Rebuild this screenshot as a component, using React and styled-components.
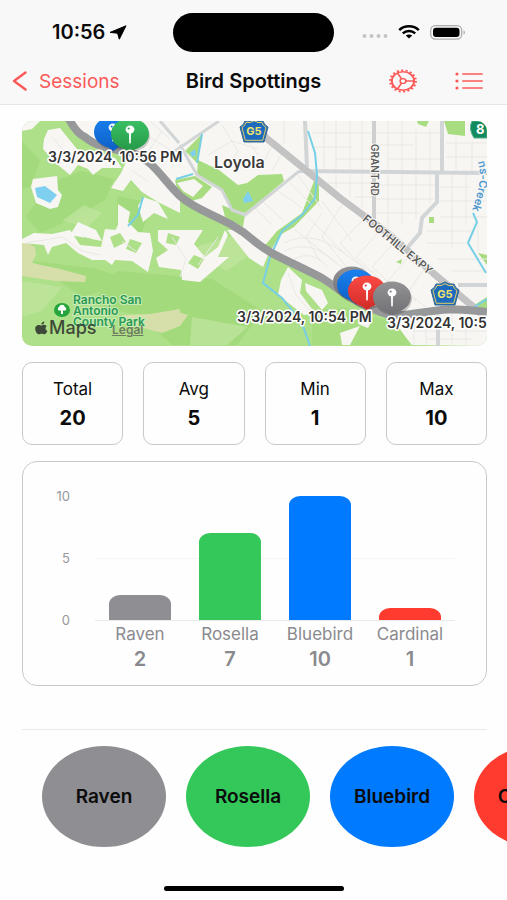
import React from "react";
import styled, { createGlobalStyle } from "styled-components";

const GlobalStyle = createGlobalStyle`
  * {
    box-sizing: border-box;
  }
  body {
    margin: 0;
    background: #fefefe;
    color: #0b0b0b;
    font-family: Inter, "Liberation Sans", sans-serif;
    font-optical-sizing: none;
    overflow-x: hidden;
  }
  h1, p, ul, dl, dd {
    margin: 0;
    padding: 0;
  }
  button {
    padding: 0;
    border: 0;
    background: none;
    font: inherit;
    color: inherit;
    cursor: pointer;
  }
`;

const Page = styled.div`
  min-height: 100vh;
  display: flex;
  flex-direction: column;
`;

const Header = styled.header`
  background: #f8f8f8;
  border-bottom: 1px solid #e6e6e6;
`;

const StatusBar = styled.div`
  height: 64px;
  display: grid;
  grid-template-columns: 1fr 161px 1fr;
  align-items: center;
`;

const Clock = styled.div`
  display: flex;
  align-items: center;
  gap: 4px;
  padding-left: 52px;
  font-size: 20px;
  font-weight: 600;
`;

const Island = styled.div`
  height: 39px;
  border-radius: 20px;
  background: #000;
`;

const Signals = styled.div`
  display: flex;
  align-items: center;
  justify-content: flex-end;
  gap: 10px;
  padding-right: 41px;
`;

const NavBar = styled.nav`
  height: 40px;
  padding: 0 0 6px;
  display: grid;
  grid-template-columns: 1fr auto 1fr;
  align-items: center;
`;

const BackLink = styled.a`
  display: flex;
  align-items: center;
  gap: 11px;
  padding-left: 12px;
  color: #fb5a58;
  font-size: 19px;
  text-decoration: none;
`;

const Title = styled.h1`
  font-size: 20px;
  font-weight: 600;
`;

const Actions = styled.div`
  display: flex;
  justify-content: flex-end;
  align-items: center;
  gap: 37px;
  padding-right: 24px;
  color: #fb5a58;

  button {
    display: flex;
  }
`;

const Content = styled.main`
  flex: 1;
  display: flex;
  flex-direction: column;
  gap: 16px;
  padding: 16px 20px 0 22px;
`;

const MapCard = styled.section`
  position: relative;
  border-radius: 10px;
  overflow: hidden;

  svg {
    display: block;
    width: 100%;
    height: auto;
  }
`;

const LegalLink = styled.a`
  position: absolute;
  left: 90px;
  bottom: 9px;
  color: #6f7d5f;
  font-size: 12px;
  line-height: 14px;
  font-weight: 600;
`;

const Stats = styled.dl`
  display: grid;
  grid-template-columns: repeat(4, 1fr);
  gap: 20px;
`;

const StatCard = styled.div`
  height: 83px;
  padding: 13px 0;
  border: 1px solid #c9c9c9;
  border-radius: 10px;
  text-align: center;

  dt {
    font-size: 17px;
    line-height: 26px;
  }
  dd {
    font-size: 20px;
    line-height: 32px;
    font-weight: 700;
  }
`;

const ChartCard = styled.section`
  display: grid;
  grid-template-columns: 47px 1fr;
  padding: 34px 31px 13px 0;
  border: 1px solid #c9c9c9;
  border-radius: 15px;
`;

const Scale = styled.div`
  height: 124px;
  display: flex;
  flex-direction: column;
  justify-content: space-between;
  text-align: right;
  color: #98989b;
  font-size: 13px;

  span {
    height: 0;
    line-height: 0;
  }
`;

const Plot = styled.div`
  margin-left: 25px;
  height: 125px;
  display: grid;
  grid-template-columns: repeat(4, 1fr);
  align-items: end;
  justify-items: center;
  border-bottom: 1px solid #e9e9e9;
  background: linear-gradient(#f6f6f6, #f6f6f6) 0 62px / 100% 1px no-repeat;
`;

const Bar = styled.div`
  width: 62px;
  border-radius: 11px 11px 0 0 / 9px 9px 0 0;
  background: ${(props) => props.$color};
`;

const Legend = styled.ul`
  && {
    padding-top: 1px;
  }
  grid-column: 2;
  margin-left: 25px;
  display: grid;
  grid-template-columns: repeat(4, 1fr);
  list-style: none;
  text-align: center;
  color: #8a8a8e;
  font-size: 17px;
  line-height: 25px;

  strong {
    display: block;
    font-size: 20px;
    font-weight: 600;
  }
`;

const BirdStrip = styled.div`
  margin-top: 27px;
  margin-right: -20px;
  display: flex;
  flex-direction: column;
  gap: 16px;
  overflow: hidden;
`;

const Divider = styled.hr`
  width: calc(100% - 20px);
  margin: 0;
  border: 0;
  border-top: 1px solid #e9e9e9;
`;

const BirdRow = styled.div`
  display: flex;
  gap: 20px;
  padding-left: 20px;
`;

const BirdButton = styled.button`
  && {
    flex: none;
    width: 124px;
    height: 101px;
    border-radius: 50%;
    background: ${(props) => props.$color};
    font-size: 19px;
    font-weight: 600;
  }
`;

const HomeIndicator = styled.div`
  width: 180px;
  height: 5px;
  margin: 24px auto 9px;
  border-radius: 3px;
  background: #000;
`;

const COLORS = {
  gray: "#8e8e93",
  green: "#34c759",
  blue: "#007aff",
  red: "#ff3b30",
};

const birds = [
  { name: "Raven", count: 2, color: COLORS.gray },
  { name: "Rosella", count: 7, color: COLORS.green },
  { name: "Bluebird", count: 10, color: COLORS.blue },
  { name: "Cardinal", count: 1, color: COLORS.red },
];

const stats = [
  ["Total", 20],
  ["Avg", 5],
  ["Min", 1],
  ["Max", 10],
];

const LocationArrow = () => (
  <svg width="18" height="15" viewBox="0 0 18 15" aria-hidden="true">
    <path
      d="M17 .8 1 7.400 8.600 8.200 10.300 14.200Z"
      fill="#000"
      stroke="#000"
      strokeWidth="1"
      strokeLinejoin="round"
    />
  </svg>
);

const Dots = () => (
  <svg width="26" height="14" viewBox="0 0 26 14" aria-hidden="true">
    {[2, 9, 16, 23].map((x) => (
      <circle key={x} cx={x + 0.5} cy="11" r="2" fill="#c4c4c6" />
    ))}
  </svg>
);

const Wifi = () => (
  <svg width="22" height="14" viewBox="0 0 22 14" aria-hidden="true">
    <g fill="none" stroke="#000" strokeWidth="2.500">
      <path d="M1.200 5.100C6.500.1 15.500.1 20.800 5.100" />
      <path d="M4.800 8.300c3.400-3.100 9-3.100 12.400 0" />
    </g>
    <path d="M7.800 10.500c1.900-1.500 4.500-1.500 6.400 0L11 13.600Z" fill="#000" />
  </svg>
);

const Battery = () => (
  <svg width="36" height="15" viewBox="0 0 36 15" aria-hidden="true">
    <rect x=".7" y=".7" width="31" height="13.400" rx="4.500" fill="none" stroke="#adadad" strokeWidth="1.300" />
    <rect x="3" y="2.700" width="26.500" height="9.400" rx="3" fill="#000" />
    <path d="M33.500 5.200c2 .8 2 3.600 0 4.400Z" fill="#adadad" />
  </svg>
);

const BackChevron = () => (
  <svg width="16" height="20" viewBox="0 0 16 20" aria-hidden="true">
    <path
      d="M13.500 1.500 2 10l11.500 8.500"
      fill="none"
      stroke="currentColor"
      strokeWidth="2.400"
      strokeLinecap="round"
      strokeLinejoin="round"
    />
  </svg>
);

const GearIcon = () => (
  <svg width="30" height="24" viewBox="0 0 30 24" fill="none" stroke="currentColor" aria-hidden="true">
    <g transform="translate(15 12) scale(1.200 1)">
      <circle r="9.300" strokeWidth="1.600" />
      <circle r="10.700" strokeWidth="1.800" strokeDasharray="1.700 2.035" />
      <circle r="2.400" strokeWidth="1.400" />
      <path d="M2.500 0h7M-1.200-2.200-4.700-8.200M-1.200 2.200-4.700 8.200" strokeWidth="1.400" />
    </g>
  </svg>
);

const ListIcon = () => (
  <svg width="28" height="18" viewBox="0 0 28 18" aria-hidden="true">
    {[2, 9, 16].map((y) => (
      <g key={y} fill="currentColor">
        <circle cx="2" cy={y} r="1.600" />
        <rect x="7" y={y - 0.8} width="21" height="1.600" rx=".8" />
      </g>
    ))}
  </svg>
);

const Pin = ({ x, y, color }) => (
  <g transform={`translate(${x} ${y})`}>
    <ellipse cx="1" cy="2" rx="19" ry="16" fill="#000" opacity=".18" />
    <path
      d="M-19 0C-19-9-10.500-15.500 0-15.500S19-9 19 0C19 8 12 13.500 5 15.200L0 19.500-5 15.200C-12 13.500-19 8-19 0Z"
      fill={color}
    />
    <path d="M-1-1H1L.8 8.500 0 10-.8 8.500Z" fill="#fff" />
    <ellipse cy="-4.500" rx="4.400" ry="4" fill="#fff" />
    <circle cx="-1.300" cy="-5.500" r="1.100" fill={color} />
  </g>
);

const Shield = ({ x, y }) => (
  <g transform={`translate(${x} ${y})`}>
    <path
      d="M-9-10Q-4-9 0-12 4-9 9-10 10-6 14-4L10 11H-10L-14-4Q-10-6-9-10Z"
      fill="#1d6bbd"
      stroke="#34668f"
      strokeWidth="1"
    />
    <path d="M-8-8.500Q-4-7.500 0-10.300 4-7.500 8-8.500 9-5 12-3.500L8.700 9.300H-8.700L-12-3.500Q-9-5-8-8.500Z" fill="none" stroke="#e2cf68" />
    <text y="4" textAnchor="middle" fontSize="11" fontWeight="700" fill="#f4e36b">
      G5
    </text>
  </g>
);

const SpottingsMap = () => (
  <svg viewBox="0 0 465 225" fontFamily="Inter, 'Liberation Sans', sans-serif" aria-label="Map of spottings">
    <defs>
      <linearGradient id="pinGray" x2="0" y2="1">
        <stop stopColor="#939396" />
        <stop offset="1" stopColor="#6f6f73" />
      </linearGradient>
      <linearGradient id="pinGreen" x2="0" y2="1">
        <stop stopColor="#3cc266" />
        <stop offset="1" stopColor="#239544" />
      </linearGradient>
      <linearGradient id="pinBlue" x2="0" y2="1">
        <stop stopColor="#1a80f0" />
        <stop offset="1" stopColor="#0c5fc4" />
      </linearGradient>
      <linearGradient id="pinRed" x2="0" y2="1">
        <stop stopColor="#fb4a44" />
        <stop offset="1" stopColor="#cf2a26" />
      </linearGradient>
      <path id="creekPath" d="M456 41Q462 60 448 94" />
      <path id="expyPath" d="M340 99 408 155" />
    </defs>

    <rect width="465" height="225" fill="#aedf89" />
    {/* hills */}
    <g fill="#9cd775" opacity=".6">
      <path d="M28 62 60 50 92 58 84 78 50 98 18 112 4 96Z" />
      <path d="M95 150 190 158 240 190 215 224 150 224 120 196 70 182Z" />
      <path d="M0 20 18 40 8 66 0 68ZM95 75 130 82 120 112 96 108ZM10 140 75 148 110 160 60 176Z" />
    </g>
    <g fill="#c1e5a0" opacity=".7">
      <path d="M40 100 62 84 80 92 66 106ZM160 130 205 150 236 128 220 112ZM0 160 40 166 20 190 0 196Z" />
      <path d="M170 196 226 206 205 224 168 224Z" />
    </g>
    <g fill="#d6dfaa">
      <path d="M0 119 13 126 14 134 10 142 38 148 64 155 63 161 33 160 0 155Z" />
      <path d="M100 194 128 193 158 188 158 205 140 212 106 203ZM153 190 166 194 158 205 153 206Z" />
    </g>

    {/* built-up land */}
    <g fill="#f7f6f3">
      <path d="M46 0 63 16 81 26 106 31 133 44 153 69 166 81 193 92 218 108 246 132 270 142 300 157 345 186 368 196 390 224 465 225V0Z" />
      <path d="M0 0H18L10 8 0 10ZM26 9 38 7 46 17 55 28 66 31 93 37 100 47 80 47 71 54 66 48 56 44 48 54 36 44 30 38 21 28 22 18Z" />
      <path d="M108 32 133 44 158 76V92L136 81 120 71 109 59 101 70 89 67 99 52Z" />
      <path d="M11 58 35 55 36 69 40 74 36 86 28 88 14 82 9 66ZM121 76 136 81 146 98 132 92 121 101 116 85Z" />
      <path d="M96 83 108 91 106 101 116 111 103 119 92 112 96 104ZM56 101 74 109 80 120 48 114ZM0 118 12 112 30 113 48 109 58 124 79 126 83 108 104 110 128 112 131 130 126 151 110 140 93 139 90 144 83 139 70 139 56 132 44 122 30 126 26 134 22 124 0 122Z" />
      <path d="M136 109H181L172 123 183 136 196 126 203 109 206 114 196 136 207 136 178 161 160 159 159 149 137 146 134 137 146 129 136 120Z" />
      <path d="M205 109H218L246 134 241 146 227 137ZM266 146 280 159 278 172 293 192 282 194 256 174 259 159ZM283 162 300 169 306 182 300 189 284 170Z" />
    </g>
    {/* clearings inside the built-up blocks */}
    <g fill="#aedf89">
      <path d="M88 116 98 112 104 121 92 127ZM108 118 120 122 114 132 104 128ZM62 116 70 118 68 124 60 122ZM146 112 158 116 154 124 144 122ZM172 134 182 138 176 148 166 142Z" />
    </g>

    {/* parks */}
    <g fill="#a8dc80">
      <path d="M180 13 175 42 163 30Z" />
      <path d="M176 39 197 49 216 64 225 62 236 54 260 53 262 60 243 76 223 92 211 89 200 69 175 54Z" />
      <path d="M153 59 173 55 190 66 180 77 166 81 155 68ZM200 84 223 94 221 106 203 96Z" />
      <path d="M292 60H297V80L272 106 258 114 246 134 240 128 255 110 280 92Z" />
      <path d="M395 0H407L404 6 396 3ZM422 0H443V15L426 13ZM407 96H412V102H407ZM456 132 465 134V144ZM374 141 380 138 379 143Z" />
      <path d="M446 188 465 176V190ZM290 190 322 186 350 197 372 199 388 224H290Z" />
    </g>
    <path d="M155 62 172 58 181 65 171 76 161 70Z" fill="#f7f6f3" />
    <path d="M318 212 338 205 328 224 320 224ZM338 195 350 200 346 207 336 203Z" fill="#f7f6f3" />
    <path d="M13 67 23 65 35 74 28 82 15 76ZM168 32 173 28 174 34 170 36ZM221 78 226 70 231 80 222 82Z" fill="#7fcff0" />

    {/* side streets */}
    <g fill="none" stroke="#e9e8e5" strokeWidth="1">
      <path d="M262 0V22M302 0V48M314 0V50M328 0V48M340 0V50M366 0V50M380 0V50M394 8V50M408 8V50M434 18V50M450 20V50" />
      <path d="M290 12H350M290 26H330M314 38H350M354 12H418M354 24H392M366 38H418M424 22H465M424 36H465" />
      <path d="M314 54V68M328 54V76M340 54V86M366 54V110M380 54V104M394 54V98M408 54V82M430 54V128M444 54V104M456 102V130" />
      <path d="M300 62H350M332 76H350M354 64H413M354 78H412M354 92H398M418 66H448M418 80H465M418 96H465M404 110H450M404 122H444M416 138H465M430 150H465" />
      <path d="M186 34 210 20 236 28M200 4 216 30 204 48M252 22 240 44M222 14 236 34M262 28 250 50M240 80 262 100M256 70 282 88M232 86 250 104M276 54 300 88M268 62 290 84M300 80 330 120M286 96 322 132M272 108 314 142" />
      <path d="M300 92 284 116 298 140M320 84 300 116 326 148M340 100 318 122 346 152M356 112 334 136 360 160M372 122 350 146 376 170M388 134 366 160 394 180M402 148 386 172 404 186" />
      <path d="M262 122Q290 108 322 132T352 150M262 130Q288 118 312 140T340 154M272 138Q290 128 306 146" />
      <path d="M392 200V224M404 196V224M430 192V224M444 196V224M392 210H465M404 218H450" />
      <path d="M114 0 124 14 150 30M128 0 148 18M30 16 44 32 60 38M110 50 126 60M140 10 124 34M4 122 40 116 60 130 78 134M100 120 116 132M150 116 164 138 158 156M196 116 176 144M266 152 274 174 288 190" />
    </g>

    {/* main roads */}
    <g fill="none" stroke="#d2d5d6" strokeWidth="3">
      <path d="M138 0 157 22M153 30 197 0M158 24 175 54 200 69 210 89 223 94 276 51 286 48" />
      <path d="M283 0 285 46M278 50 465 52M420 0V50M415 52V81L400 97 398 112 386 126M436 164H465M416 194V225" strokeWidth="4" />
      <path d="M352 0V98" stroke="#cfcfcf" strokeWidth="4" />
      <path d="M236 0 243 16 280 46 318 77 368 114 411 152 461 194" stroke="#c3c3c4" strokeWidth="7" strokeLinejoin="round" />
    </g>
    <g fill="none" stroke="#77cfe6" strokeWidth="2">
      <path d="M286 10 293 32 295 54 293 77 280 94 260 110 248 136 241 162 260 177 280 202 288 225" />
      <path d="M180 13 175 42M154 58 171 53M451 92 455 101 446 122 464 152M465 178 451 187M121 76 116 94 106 105" />
    </g>
    <path
      d="M46-4C52 8 58 14 63 16 72 24 84 27 106 31 130 36 140 58 158 75 178 93 205 96 231 119 248 134 270 141 300 157 322 171 334 184 368 194 400 196 412 183 465 191"
      fill="none"
      stroke="#979899"
      strokeWidth="8"
    />

    <Shield x={232} y={10} />
    <Shield x={423} y={173} />
    <path d="M450 0Q446 8 452 17H465V0Z" fill="#128a5d" stroke="#57b08c" />
    <text x="454" y="13" fontSize="13" fontWeight="700" fill="#fff">
      8
    </text>

    <g fontSize="10" fontWeight="600" fill="#5c5c5c" stroke="#f7f6f3" strokeWidth="2" paintOrder="stroke">
      <text transform="translate(349 23) rotate(90)">GRANT RD</text>
      <text fontSize="11">
        <textPath href="#expyPath">FOOTHILL EXPY</textPath>
      </text>
      <text fontSize="11" fill="#4f97cf">
        <textPath href="#creekPath">ns-Creek</textPath>
      </text>
    </g>
    <text x="192" y="47" fontSize="16" fontWeight="600" fill="#3c3c3c" stroke="#fff" strokeWidth="2" paintOrder="stroke">
      Loyola
    </text>

    <ellipse cx="40" cy="189" rx="8" ry="7" fill="#25a53c" />
    <path d="M36.500 189.500a2 2 0 0 1 .6-3.400 3 3 0 0 1 5.800 0 2 2 0 0 1 .6 3.400H41V193H39V189.500Z" fill="#fff" />
    <g fontSize="12" fontWeight="600" fill="#2a9a56" stroke="#c9ecb5" strokeWidth="2" paintOrder="stroke">
      <text x="51" y="183">Rancho San</text>
      <text x="51" y="194">Antonio</text>
      <text x="51" y="205">County Park</text>
    </g>
    <g fill="#3d4a38">
      <path d="M19.500 204.500c1.200 0 2-.9 3.300-.6 1 .1 1.600.6 2.100 1.200-2 1.200-1.700 4 .5 4.800-.6 1.600-1.800 3.400-3.200 3.400-1 0-1.400-.6-2.700-.6s-1.700.6-2.700.6c-1.700 0-3.600-3.200-3.600-5.600 0-2.500 1.700-3.700 3.400-3.700 1.200 0 2 .5 2.900.5ZM19.300 203.600c-.1-1.500 1.300-3 3-3.100.2 1.600-1.300 3.100-3 3.100Z" />
      <text x="27" y="213" fontSize="18" fontWeight="500">
        Maps
      </text>
    </g>

    <Pin x={91} y={11} color="url(#pinBlue)" />
    <Pin x={108} y={13} color="url(#pinGreen)" />
    <Pin x={330} y={161} color="url(#pinGray)" />
    <Pin x={334} y={164} color="url(#pinBlue)" />
    <Pin x={345} y={170} color="url(#pinRed)" />
    <Pin x={370} y={176} color="url(#pinGray)" />

    <g fontSize="14" fontWeight="600" fill="#333" stroke="#fff" strokeWidth="3" strokeLinejoin="round" paintOrder="stroke">
      <text x="26" y="41">3/3/2024, 10:56 PM</text>
      <text x="215" y="201">3/3/2024, 10:54 PM</text>
      <text x="365" y="207">3/3/2024, 10:54 PM</text>
    </g>
  </svg>
);

const Chart = () => (
  <ChartCard aria-label="Spottings by bird">
    <Scale>
      <span>10</span>
      <span>5</span>
      <span>0</span>
    </Scale>
    <Plot>
      {birds.map((bird) => (
        <Bar key={bird.name} $color={bird.color} style={{ height: `${bird.count * 10}%` }} />
      ))}
    </Plot>
    <Legend>
      {birds.map((bird) => (
        <li key={bird.name}>
          {bird.name}
          <strong>{bird.count}</strong>
        </li>
      ))}
    </Legend>
  </ChartCard>
);

const App = () => {
  return (
    <>
      <GlobalStyle />
      <Page>
        <Header>
          <StatusBar>
            <Clock>
              10:56
              <LocationArrow />
            </Clock>
            <Island />
            <Signals>
              <Dots />
              <Wifi />
              <Battery />
            </Signals>
          </StatusBar>
          <NavBar>
            <BackLink href="#sessions">
              <BackChevron />
              Sessions
            </BackLink>
            <Title>Bird Spottings</Title>
            <Actions>
              <button type="button" aria-label="Settings">
                <GearIcon />
              </button>
              <button type="button" aria-label="List">
                <ListIcon />
              </button>
            </Actions>
          </NavBar>
        </Header>

        <Content>
          <MapCard>
            <SpottingsMap />
            <LegalLink href="#legal">Legal</LegalLink>
          </MapCard>
          <Stats>
            {stats.map(([label, value]) => (
              <StatCard key={label}>
                <dt>{label}</dt>
                <dd>{value}</dd>
              </StatCard>
            ))}
          </Stats>
          <Chart />
          <BirdStrip>
            <Divider />
            <BirdRow>
              {birds.map((bird) => (
                <BirdButton key={bird.name} type="button" $color={bird.color}>
                  {bird.name}
                </BirdButton>
              ))}
            </BirdRow>
          </BirdStrip>
        </Content>
        <HomeIndicator />
      </Page>
    </>
  );
};

export default App;
